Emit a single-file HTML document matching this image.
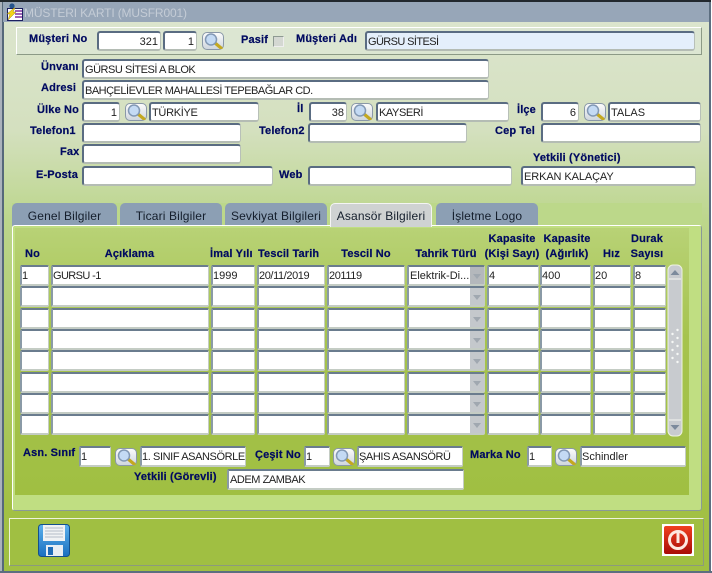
<!DOCTYPE html>
<html><head><meta charset="utf-8">
<style>
html,body{margin:0;padding:0}
body{width:712px;height:573px;overflow:hidden;position:relative;background:#fff;font-family:"Liberation Sans",sans-serif;font-size:11px;color:#111}
div,svg{position:absolute;box-sizing:border-box}
.i{background:#fff;border-top:2px solid #5a6c82;border-left:2px solid #5a6c82;border-right:1px solid #b8c0b8;border-bottom:2px solid #b4bcb4;border-radius:3px;height:20px;line-height:19px;padding-left:1px;white-space:nowrap;overflow:hidden;color:#222}
.r{text-align:right;padding-right:2px;padding-left:0}
.l{font-weight:bold;color:#000a60;white-space:nowrap;line-height:13px;font-size:11px;letter-spacing:.15px;-webkit-text-stroke:.2px #000a60}
.c{text-align:center}
.t{top:203px;height:23px;background:#8c9fb4;border-radius:5px 5px 0 0;text-align:center;line-height:26px;font-size:12px;color:#141e2c;letter-spacing:.15px}
.g{background:#fff;border-top:2px solid #6a7c8e;border-left:2px solid #8a9aa6;border-right:1px solid #c4ccc4;border-bottom:2px solid #c4ccc4;border-radius:2px;height:21px;line-height:19px;padding-left:0;white-space:nowrap;overflow:hidden;color:#222}
.b{width:22px;height:18px;background:linear-gradient(#fbfbfb,#cfd6de);border:1px solid #8a98a8;border-radius:5px}
.dd{right:0;top:0;bottom:0;width:14px;background:#c4c8cc}
.dd:after{content:"";position:absolute;left:3px;top:7px;border:4px solid transparent;border-top:5px solid #a0a8b0;border-bottom:0}
</style></head><body>
<svg width="0" height="0" style="position:absolute"><defs><symbol id="m" viewBox="0 0 20 16"><path d="M12 10l6 5" stroke="#c4a820" stroke-width="3.200" stroke-linecap="round"/><circle cx="8" cy="6.500" r="5.500" fill="#c4daf4" stroke="#8298b4" stroke-width="1.500"/></symbol></defs></svg>

<!-- window frame -->
<div style="left:0;top:0;width:712px;height:573px;background:linear-gradient(#dde6d0 0,#d4e0bf 130px,#bcd68c 220px,#a2c044 510px,#a0bf42 573px)"></div>
<div style="left:0;top:0;width:712px;height:2px;background:#22282e"></div>
<div style="left:0;top:2px;width:3px;height:571px;background:#aab2bc"></div>
<div style="left:2px;top:2px;width:2px;height:571px;background:#56687a"></div>
<div style="left:709px;top:2px;width:2px;height:571px;background:#5c6e80"></div>
<div style="left:711px;top:0;width:1px;height:573px;background:#fff"></div>
<div style="left:0;top:571px;width:712px;height:2px;background:#5c6e80"></div>

<!-- title -->
<div style="left:3px;top:2px;width:706px;height:20px;background:#97a6b8"></div>
<div style="left:24px;top:5px;font-size:12px;line-height:16px;color:#c4ccd6;letter-spacing:-.15px;white-space:nowrap">MÜSTERI KARTI (MUSFR001)</div>
<svg style="left:5px;top:3px" width="18" height="18" viewBox="0 0 18 18"><circle cx="7" cy="3" r="2.600" fill="#26548c"/><rect x="2.500" y="5.500" width="15" height="12" fill="#fff" stroke="#1c2060"/><path d="M10 8h7M10 11h7M10 14h7" stroke="#8030a0" stroke-width="1.500"/><path d="M9 5L2 11h3l-2 6 8-8H8l2-4z" fill="#f4d418" stroke="#8a7010" stroke-width=".4"/></svg>

<!-- header group -->
<div style="left:16px;top:27px;width:686px;height:28px;border:1px solid;border-color:#fff #8c9a86 #8c9a86 #fff;background:#dce6d2"></div>
<div class="l" style="left:29px;top:33px">Müşteri No</div>
<div class="i r" style="left:97px;top:31px;width:64px">321</div>
<div class="i r" style="left:163px;top:31px;width:34px">1</div>
<div class="b" style="left:202px;top:32px"><svg width="20" height="16"><use href="#m" width="20" height="16"/></svg></div>
<div class="l" style="left:241px;top:34px">Pasif</div>
<div style="left:273px;top:36px;width:11px;height:11px;background:#d4d8d2;border:1px solid #8e9a92;border-right-color:#eee;border-bottom-color:#eee"></div>
<div class="l" style="left:296px;top:33px">Müşteri Adı</div>
<div class="i" style="left:365px;top:31px;width:330px;background:#e4effb;letter-spacing:-.6px">GÜRSU SİTESİ</div>

<!-- main fields -->
<div class="l" style="left:41px;top:61px">Ünvanı</div>
<div class="i" style="left:82px;top:59px;width:407px;letter-spacing:-.47px">GÜRSU SİTESİ A BLOK</div>
<div class="l" style="left:41px;top:82px">Adresi</div>
<div class="i" style="left:82px;top:80px;width:407px;letter-spacing:-.5px">BAHÇELİEVLER MAHALLESİ TEPEBAĞLAR CD.</div>

<div class="l" style="left:37px;top:104px">Ülke No</div>
<div class="i r" style="left:82px;top:102px;width:38px">1</div>
<div class="b" style="left:125px;top:103px"><svg width="20" height="16"><use href="#m" width="20" height="16"/></svg></div>
<div class="i" style="left:149px;top:102px;width:110px;letter-spacing:-.3px">TÜRKİYE</div>
<div class="l" style="left:297px;top:103px">İl</div>
<div class="i r" style="left:309px;top:102px;width:38px">38</div>
<div class="b" style="left:351px;top:103px"><svg width="20" height="16"><use href="#m" width="20" height="16"/></svg></div>
<div class="i" style="left:376px;top:102px;width:133px;letter-spacing:-.4px">KAYSERİ</div>
<div class="l" style="left:517px;top:104px">İlçe</div>
<div class="i r" style="left:541px;top:102px;width:38px">6</div>
<div class="b" style="left:584px;top:103px"><svg width="20" height="16"><use href="#m" width="20" height="16"/></svg></div>
<div class="i" style="left:608px;top:102px;width:93px">TALAS</div>

<div class="l" style="left:30px;top:125px">Telefon1</div>
<div class="i" style="left:82px;top:123px;width:159px"></div>
<div class="l" style="left:259px;top:125px">Telefon2</div>
<div class="i" style="left:308px;top:123px;width:159px"></div>
<div class="l" style="left:495px;top:125px">Cep Tel</div>
<div class="i" style="left:541px;top:123px;width:160px"></div>

<div class="l" style="left:60px;top:146px">Fax</div>
<div class="i" style="left:82px;top:144px;width:159px"></div>

<div class="l" style="left:533px;top:152px">Yetkili (Yönetici)</div>
<div class="l" style="left:36px;top:169px">E-Posta</div>
<div class="i" style="left:82px;top:166px;width:191px"></div>
<div class="l" style="left:279px;top:169px">Web</div>
<div class="i" style="left:308px;top:166px;width:204px"></div>
<div class="i" style="left:521px;top:166px;width:175px;letter-spacing:-.1px">ERKAN KALAÇAY</div>

<!-- tab strip background -->
<div style="left:12px;top:203px;width:690px;height:24px;background:#bcd88a"></div>

<!-- tabs -->
<div class="t" style="left:12px;width:105px">Genel Bilgiler</div>
<div class="t" style="left:120px;width:102px">Ticari Bilgiler</div>
<div class="t" style="left:225px;width:102px">Sevkiyat Bilgileri</div>
<div class="t" style="left:330px;width:102px;height:24px;background:#cfd2d2;border:1px solid #f4f4f4;border-bottom:0;line-height:24px;z-index:2">Asansör Bilgileri</div>
<div class="t" style="left:436px;width:102px">İşletme Logo</div>

<!-- panel -->
<div style="left:12px;top:225px;width:690px;height:286px;background:#c0de82;border:1px solid;border-color:#fff #8a9a96 #8a9a96 #fff;border-radius:3px"></div>
<div style="left:15px;top:228px;width:674px;height:267px;background:linear-gradient(#b8d276 0,#a6c34e 110px,#a0bf42 100%)"></div>

<!-- grid headers -->
<div class="l c" style="left:20px;top:248px;width:25px">No</div>
<div class="l c" style="left:51px;top:248px;width:157px">Açıklama</div>
<div class="l" style="left:210px;top:248px">İmal Yılı</div>
<div class="l" style="left:258px;top:248px">Tescil Tarih</div>
<div class="l c" style="left:327px;top:248px;width:78px">Tescil No</div>
<div class="l c" style="left:407px;top:248px;width:78px">Tahrik Türü</div>
<div class="l c" style="left:481px;top:232px;width:62px;line-height:15px">Kapasite<br>(Kişi Sayı)</div>
<div class="l c" style="left:536px;top:232px;width:62px;line-height:15px">Kapasite<br>(Ağırlık)</div>
<div class="l c" style="left:593px;top:248px;width:37px">Hız</div>
<div class="l c" style="left:625px;top:232px;width:44px;line-height:15px">Durak<br>Sayısı</div>

<!-- row 1 -->
<div class="g" style="left:20px;top:265px;width:29px">1</div><div class="g" style="left:51px;top:265px;width:158px;letter-spacing:-.6px">GURSU -1</div><div class="g" style="left:211px;top:265px;width:44px">1999</div><div class="g" style="left:257px;top:265px;width:68px;letter-spacing:-.4px">20/11/2019</div><div class="g" style="left:327px;top:265px;width:78px;letter-spacing:-.4px">201119</div><div class="g" style="left:407px;top:265px;width:78px;padding-left:1px">Elektrik-Di...<div class="dd" style="background:#b4b8bc"></div></div><div class="g" style="left:487px;top:265px;width:52px">4</div><div class="g" style="left:540px;top:265px;width:51px">400</div><div class="g" style="left:593px;top:265px;width:38px">20</div><div class="g" style="left:633px;top:265px;width:33px">8</div>
<!-- row 2 -->
<div class="g" style="left:20px;top:286px;width:29px"></div><div class="g" style="left:51px;top:286px;width:158px"></div><div class="g" style="left:211px;top:286px;width:44px"></div><div class="g" style="left:257px;top:286px;width:68px"></div><div class="g" style="left:327px;top:286px;width:78px"></div><div class="g" style="left:407px;top:286px;width:78px"><div class="dd"></div></div><div class="g" style="left:487px;top:286px;width:52px"></div><div class="g" style="left:540px;top:286px;width:51px"></div><div class="g" style="left:593px;top:286px;width:38px"></div><div class="g" style="left:633px;top:286px;width:33px"></div>
<!-- row 3 -->
<div class="g" style="left:20px;top:308px;width:29px"></div><div class="g" style="left:51px;top:308px;width:158px"></div><div class="g" style="left:211px;top:308px;width:44px"></div><div class="g" style="left:257px;top:308px;width:68px"></div><div class="g" style="left:327px;top:308px;width:78px"></div><div class="g" style="left:407px;top:308px;width:78px"><div class="dd"></div></div><div class="g" style="left:487px;top:308px;width:52px"></div><div class="g" style="left:540px;top:308px;width:51px"></div><div class="g" style="left:593px;top:308px;width:38px"></div><div class="g" style="left:633px;top:308px;width:33px"></div>
<!-- row 4 -->
<div class="g" style="left:20px;top:329px;width:29px"></div><div class="g" style="left:51px;top:329px;width:158px"></div><div class="g" style="left:211px;top:329px;width:44px"></div><div class="g" style="left:257px;top:329px;width:68px"></div><div class="g" style="left:327px;top:329px;width:78px"></div><div class="g" style="left:407px;top:329px;width:78px"><div class="dd"></div></div><div class="g" style="left:487px;top:329px;width:52px"></div><div class="g" style="left:540px;top:329px;width:51px"></div><div class="g" style="left:593px;top:329px;width:38px"></div><div class="g" style="left:633px;top:329px;width:33px"></div>
<!-- row 5 -->
<div class="g" style="left:20px;top:350px;width:29px"></div><div class="g" style="left:51px;top:350px;width:158px"></div><div class="g" style="left:211px;top:350px;width:44px"></div><div class="g" style="left:257px;top:350px;width:68px"></div><div class="g" style="left:327px;top:350px;width:78px"></div><div class="g" style="left:407px;top:350px;width:78px"><div class="dd"></div></div><div class="g" style="left:487px;top:350px;width:52px"></div><div class="g" style="left:540px;top:350px;width:51px"></div><div class="g" style="left:593px;top:350px;width:38px"></div><div class="g" style="left:633px;top:350px;width:33px"></div>
<!-- row 6 -->
<div class="g" style="left:20px;top:372px;width:29px"></div><div class="g" style="left:51px;top:372px;width:158px"></div><div class="g" style="left:211px;top:372px;width:44px"></div><div class="g" style="left:257px;top:372px;width:68px"></div><div class="g" style="left:327px;top:372px;width:78px"></div><div class="g" style="left:407px;top:372px;width:78px"><div class="dd"></div></div><div class="g" style="left:487px;top:372px;width:52px"></div><div class="g" style="left:540px;top:372px;width:51px"></div><div class="g" style="left:593px;top:372px;width:38px"></div><div class="g" style="left:633px;top:372px;width:33px"></div>
<!-- row 7 -->
<div class="g" style="left:20px;top:393px;width:29px"></div><div class="g" style="left:51px;top:393px;width:158px"></div><div class="g" style="left:211px;top:393px;width:44px"></div><div class="g" style="left:257px;top:393px;width:68px"></div><div class="g" style="left:327px;top:393px;width:78px"></div><div class="g" style="left:407px;top:393px;width:78px"><div class="dd"></div></div><div class="g" style="left:487px;top:393px;width:52px"></div><div class="g" style="left:540px;top:393px;width:51px"></div><div class="g" style="left:593px;top:393px;width:38px"></div><div class="g" style="left:633px;top:393px;width:33px"></div>
<!-- row 8 -->
<div class="g" style="left:20px;top:414px;width:29px"></div><div class="g" style="left:51px;top:414px;width:158px"></div><div class="g" style="left:211px;top:414px;width:44px"></div><div class="g" style="left:257px;top:414px;width:68px"></div><div class="g" style="left:327px;top:414px;width:78px"></div><div class="g" style="left:407px;top:414px;width:78px"><div class="dd"></div></div><div class="g" style="left:487px;top:414px;width:52px"></div><div class="g" style="left:540px;top:414px;width:51px"></div><div class="g" style="left:593px;top:414px;width:38px"></div><div class="g" style="left:633px;top:414px;width:33px"></div>

<!-- scrollbar -->
<svg style="left:667px;top:264px" width="16" height="173" viewBox="0 0 16 173">
<rect x="1" y="1" width="14" height="171" rx="5" fill="#c8cbcf" stroke="#eef3e0"/>
<path d="M2 15h12M2 156h12" stroke="#f4f6f0"/>
<path d="M3.500 11l4.500-5 4.500 5z" fill="#7c8a9c"/>
<path d="M3.500 161l4.500 5 4.500-5z" fill="#7c8a9c"/>
<g fill="#f6f8f6"><circle cx="10.500" cy="66" r="1.200"/><circle cx="5.500" cy="70" r="1.200"/><circle cx="10.500" cy="74" r="1.200"/><circle cx="5.500" cy="78" r="1.200"/><circle cx="10.500" cy="82" r="1.200"/><circle cx="5.500" cy="86" r="1.200"/><circle cx="10.500" cy="90" r="1.200"/><circle cx="5.500" cy="94" r="1.200"/><circle cx="10.500" cy="98" r="1.200"/></g>
</svg>

<!-- lower fields -->
<div class="l" style="left:23px;top:447px">Asn. Sınıf</div>
<div class="g" style="left:79px;top:446px;width:32px">1</div>
<div class="b" style="left:115px;top:448px"><svg width="20" height="16"><use href="#m" width="20" height="16"/></svg></div>
<div class="g" style="left:140px;top:446px;width:106px;letter-spacing:-.4px">1. SINIF ASANSÖRLE</div>
<div class="l" style="left:255px;top:449px">Çeşit No</div>
<div class="g" style="left:304px;top:446px;width:26px">1</div>
<div class="b" style="left:333px;top:448px"><svg width="20" height="16"><use href="#m" width="20" height="16"/></svg></div>
<div class="g" style="left:357px;top:446px;width:106px;letter-spacing:-.4px">ŞAHIS ASANSÖRÜ</div>
<div class="l" style="left:470px;top:449px">Marka No</div>
<div class="g" style="left:527px;top:446px;width:25px">1</div>
<div class="b" style="left:555px;top:448px"><svg width="20" height="16"><use href="#m" width="20" height="16"/></svg></div>
<div class="g" style="left:580px;top:446px;width:106px">Schindler</div>
<div class="l" style="left:134px;top:471px">Yetkili (Görevli)</div>
<div class="g" style="left:227px;top:469px;width:237px;padding-left:1px;letter-spacing:-.45px">ADEM ZAMBAK</div>

<!-- bottom toolbar -->
<div style="left:9px;top:518px;width:695px;height:48px;border:1px solid;border-color:#eef3dc #8c9a7c #8c9a7c #eef3dc;background:#a0bf42"></div>
<svg style="left:38px;top:524px" width="32" height="33" viewBox="0 0 32 33">
<defs><linearGradient id="bl" x1="0" y1="0" x2="0" y2="1"><stop offset="0" stop-color="#5cb0ec"/><stop offset="1" stop-color="#1a70c0"/></linearGradient></defs>
<rect x=".5" y=".5" width="31" height="32" rx="3" fill="url(#bl)" stroke="#14508c"/>
<rect x="5" y="1" width="22" height="16" fill="#f0f2f4"/>
<path d="M7 4h18M7 7h18M7 10h18M7 13h18" stroke="#b4bcc8"/>
<rect x="8" y="21" width="17" height="11" fill="#e8eef4"/>
<rect x="10" y="23" width="5" height="8" fill="#1e6cb8"/>
</svg>
<div style="left:662px;top:524px;width:32px;height:32px;background:#fff"></div>
<svg style="left:664px;top:526px" width="28" height="28" viewBox="0 0 28 28">
<defs><linearGradient id="rd" x1="0" y1="0" x2="0" y2="1"><stop offset="0" stop-color="#f04020"/><stop offset="1" stop-color="#a80c08"/></linearGradient></defs>
<rect width="28" height="28" rx="2" fill="url(#rd)"/>
<circle cx="14" cy="14" r="8.500" fill="none" stroke="#fde8e0" stroke-width="3"/>
<path d="M14 6v11" stroke="#fde8e0" stroke-width="3"/>
</svg>
</body></html>
